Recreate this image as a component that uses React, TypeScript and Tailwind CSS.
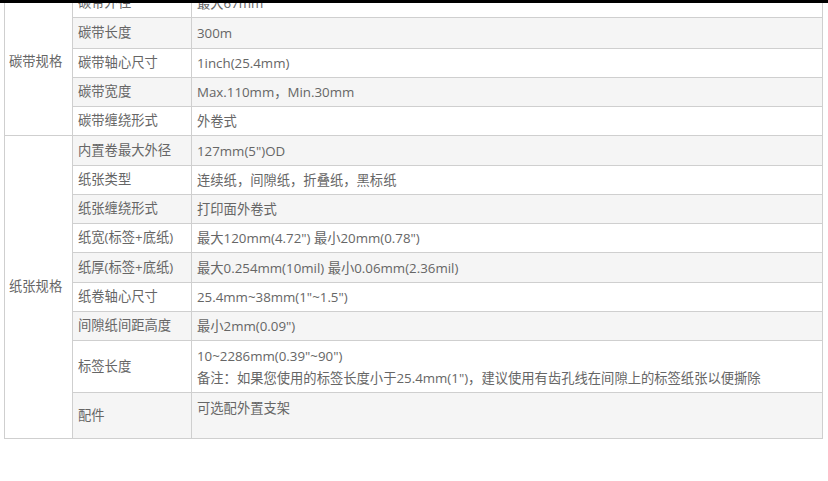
import React from "react";

type Row = { label: string; value: string[]; h: string; top?: boolean };

const ribbon: Row[] = [
  { label: "碳带外径", value: ["最大67mm"], h: "h-[29px]" },
  { label: "碳带长度", value: ["300m"], h: "h-[31px]" },
  { label: "碳带轴心尺寸", value: ["1inch(25.4mm)"], h: "h-[29px]" },
  { label: "碳带宽度", value: ["Max.110mm，Min.30mm"], h: "h-[29px]" },
  { label: "碳带缠绕形式", value: ["外卷式"], h: "h-[29px]" },
];

const paper: Row[] = [
  { label: "内置卷最大外径", value: ["127mm(5\")OD"], h: "h-[30px]" },
  { label: "纸张类型", value: ["连续纸，间隙纸，折叠纸，黑标纸"], h: "h-[29px]" },
  { label: "纸张缠绕形式", value: ["打印面外卷式"], h: "h-[29px]" },
  { label: "纸宽(标签+底纸)", value: ["最大120mm(4.72\") 最小20mm(0.78\")"], h: "h-[29px]" },
  { label: "纸厚(标签+底纸)", value: ["最大0.254mm(10mil) 最小0.06mm(2.36mil)"], h: "h-[30px]" },
  { label: "纸卷轴心尺寸", value: ["25.4mm~38mm(1\"~1.5\")"], h: "h-[29px]" },
  { label: "间隙纸间距高度", value: ["最小2mm(0.09\")"], h: "h-[29px]" },
  {
    label: "标签长度",
    value: [
      "10~2286mm(0.39\"~90\")",
      "备注：如果您使用的标签长度小于25.4mm(1\")，建议使用有齿孔线在间隙上的标签纸张以便撕除",
    ],
    h: "h-[52px]",
    top: true,
  },
  { label: "配件", value: ["可选配外置支架"], h: "h-[46px]", top: true },
];

function Group({ name, rows, offset }: { name: string; rows: Row[]; offset: number }) {
  return (
    <>
      {rows.map((r, i) => {
        const gray = (i + offset) % 2 === 1;
        return (
          <tr key={r.label} className={gray ? "bg-[#f5f5f5]" : "bg-white"}>
            {i === 0 && (
              <td
                rowSpan={rows.length}
                className="bg-white border border-[#cfcfcf] px-[4px] align-middle whitespace-nowrap"
              >
                {name}
              </td>
            )}
            <td className={`border border-[#cfcfcf] pl-[5px] align-middle whitespace-nowrap ${r.h}`}>
              {r.label}
            </td>
            <td
              className={`border border-[#cfcfcf] pl-[5px] ${r.top ? "align-top pt-[4px]" : "align-middle"}`}
            >
              {r.value.map((v) => (
                <div key={v} className="leading-[22px] whitespace-nowrap">
                  {v}
                </div>
              ))}
            </td>
          </tr>
        );
      })}
    </>
  );
}

export default function App() {
  return (
    <div
      className="relative w-[828px] h-[481px] overflow-hidden bg-white text-[13.3px] text-[#666]"
      style={{ fontFamily: '"Open Sans", "Noto Sans CJK SC", sans-serif' }}
    >
      <div className="absolute top-0 left-0 right-0 h-[3px] bg-black z-10" />
      <div className="pl-[4px] mt-[-12px]">
        <table className="w-[819px] border-collapse table-fixed">
          <colgroup>
            <col className="w-[68px]" />
            <col className="w-[119px]" />
            <col />
          </colgroup>
          <tbody>
            <Group name="碳带规格" rows={ribbon} offset={0} />
            <Group name="纸张规格" rows={paper} offset={1} />
          </tbody>
        </table>
      </div>
    </div>
  );
}
